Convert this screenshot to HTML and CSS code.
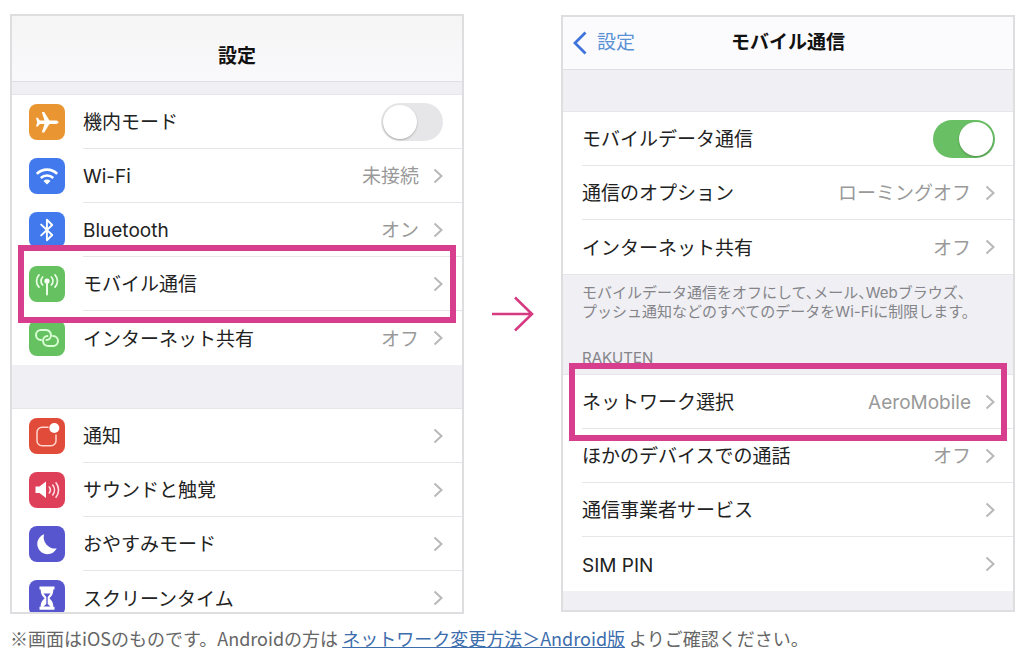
FILE: index.html
```html
<!DOCTYPE html>
<html lang="ja">
<head>
<meta charset="utf-8">
<meta name="viewport" content="width=device-width, initial-scale=1">
<title>モバイル通信の設定</title>
<link rel="stylesheet" href="styles.css">
</head>
<body>
<svg class="sprite" aria-hidden="true">
  <symbol id="chevron" viewBox="0 0 10 16"><path d="M1.5 1.5 8.5 8 1.5 14.5" fill="none" stroke="currentColor" stroke-width="2"/></symbol>
</svg>
<main class="steps">
  <section class="phone">
    <header class="bar bar-tall"><h2 class="title">設定</h2></header>
    <ul class="group group-first">
      <li class="row">
        <span class="icon orange"><svg viewBox="0 0 36 36"><path fill="#fff" d="M29.5 18.200c0 1.200-1.800 1.800-3.200 1.800h-5.800l-5.300 8.400h-2.400l2.700-8.400h-4.700l-2 2.600H7l1.200-4.400L7 13.800h1.800l2 2.600h4.700L12.800 8h2.400l5.300 8.400h5.800c1.400 0 3.200.6 3.200 1.800z"/></svg></span>
        <span class="body"><label class="label" for="airplane">機内モード</label><input class="switch" type="checkbox" role="switch" id="airplane"></span>
      </li>
      <li><a class="row" href="#wifi">
        <span class="icon blue"><svg viewBox="0 0 36 36"><g fill="none" stroke="#fff" stroke-width="2.600"><path d="M7.800 15.800a14.500 14.500 0 0 1 20.400 0"/><path d="M11.800 20a9 9 0 0 1 12.400 0"/></g><path fill="#fff" d="M14.500 23a5 5 0 0 1 7 0L18 26.600z"/></svg></span>
        <span class="body"><span class="label">Wi-Fi</span><span class="value">未接続</span><svg class="chevron"><use href="#chevron"/></svg></span>
      </a></li>
      <li><a class="row" href="#bluetooth">
        <span class="icon blue"><svg viewBox="0 0 36 36"><path d="m12.200 12.600 11 10.400-5.300 5.200V7.800l5.300 5.200-11 10.400" fill="none" stroke="#fff" stroke-width="1.900" stroke-linejoin="round" stroke-linecap="round"/></svg></span>
        <span class="body"><span class="label">Bluetooth</span><span class="value">オン</span><svg class="chevron"><use href="#chevron"/></svg></span>
      </a></li>
      <li class="marked"><a class="row" href="#mobile">
        <span class="icon green"><svg viewBox="0 0 36 36"><circle cx="18" cy="15" r="2.600" fill="#fff"/><g fill="none" stroke="#e9ffe6" stroke-width="1.700" stroke-linecap="round"><path d="M18 16v12.500" stroke-width="2"/><path d="M13.700 11a5.600 5.600 0 0 0 0 8M22.300 11a5.600 5.600 0 0 1 0 8M10 8.800a9 9 0 0 0 0 12.400M26 8.800a9 9 0 0 1 0 12.400"/></g></svg></span>
        <span class="body"><span class="label">モバイル通信</span><svg class="chevron"><use href="#chevron"/></svg></span>
      </a></li>
      <li><a class="row" href="#tethering">
        <span class="icon green"><svg viewBox="0 0 36 36"><g fill="none" stroke="#d9ffd5" stroke-width="2" stroke-linecap="round"><path d="M12 20a5 5 0 0 1 0-10h5a5.500 5.500 0 0 1 5 5c0 3-2 5-4.500 5"/><path d="M24 16a5 5 0 0 1 0 10h-5a5.500 5.500 0 0 1-5-5c0-3 2-5 4.500-5"/></g></svg></span>
        <span class="body"><span class="label">インターネット共有</span><span class="value">オフ</span><svg class="chevron"><use href="#chevron"/></svg></span>
      </a></li>
    </ul>
    <ul class="group group-cut">
      <li><a class="row" href="#notice">
        <span class="icon red"><svg viewBox="0 0 36 36"><path d="M19.500 9.200H13a5 5 0 0 0-5 5v8.600a5 5 0 0 0 5 5h9a5 5 0 0 0 5-5V16.500" fill="none" stroke="#ffd5cd" stroke-width="1.500"/><circle cx="25.300" cy="10" r="5" fill="#fff"/></svg></span>
        <span class="body"><span class="label">通知</span><svg class="chevron"><use href="#chevron"/></svg></span>
      </a></li>
      <li><a class="row" href="#sound">
        <span class="icon rose"><svg viewBox="0 0 36 36"><path d="M6.500 14.500h4L17 9.500v16.500l-6.500-5h-4z" fill="#fff"/><g fill="none" stroke="#ffdfe5" stroke-width="1.600" stroke-linecap="round"><path d="M20.300 15a5 5 0 0 1 0 6M23.700 13a8 8 0 0 1 0 10M27 10.800a11.500 11.500 0 0 1 0 14.400"/></g></svg></span>
        <span class="body"><span class="label">サウンドと触覚</span><svg class="chevron"><use href="#chevron"/></svg></span>
      </a></li>
      <li><a class="row" href="#dnd">
        <span class="icon violet"><svg viewBox="0 0 36 36"><path d="M15.200 8.300a10.200 10.200 0 1 0 12.500 14A11 11 0 0 1 15.200 8.300z" fill="#fff"/></svg></span>
        <span class="body"><span class="label">おやすみモード</span><svg class="chevron"><use href="#chevron"/></svg></span>
      </a></li>
      <li><a class="row" href="#screentime">
        <span class="icon violet"><svg viewBox="0 0 36 36"><path d="M10.500 6.500h15v3h-1.200c0 4.500-1.500 6.500-4 8.700 2.500 2.200 4 4.200 4 8.600h1.200v3h-15v-3h1.200c0-4.400 1.500-6.400 4-8.600-2.500-2.200-4-4.200-4-8.700h-1.200z" fill="#fff"/><path d="M14.500 13.500h7L18.700 17v7l2.800 2.500h-7l2.800-2.500v-7z" fill="#5756ce"/></svg></span>
        <span class="body"><span class="label">スクリーンタイム</span><svg class="chevron"><use href="#chevron"/></svg></span>
      </a></li>
    </ul>
  </section>

  <svg class="arrow" viewBox="0 0 42 36" role="img" aria-label="次へ"><path d="M0 18h40M23 1.500 40 18 23 34.500" fill="none" stroke="#d63a80" stroke-width="2.600"/></svg>

  <section class="phone phone-plain">
    <header class="bar">
      <a class="back" href="#settings"><svg class="back-mark" viewBox="0 0 14 24"><path d="M12.500 1.500 2 12l10.500 10.500" fill="none" stroke="#3f73dc" stroke-width="2.800"/></svg>設定</a>
      <h2 class="title">モバイル通信</h2>
    </header>
    <ul class="group group-top">
      <li class="row"><span class="body"><label class="label" for="data">モバイルデータ通信</label><input class="switch" type="checkbox" role="switch" id="data" checked></span></li>
      <li><a class="row" href="#options"><span class="body"><span class="label">通信のオプション</span><span class="value">ローミングオフ</span><svg class="chevron"><use href="#chevron"/></svg></span></a></li>
      <li><a class="row" href="#sharing"><span class="body"><span class="label">インターネット共有</span><span class="value">オフ</span><svg class="chevron"><use href="#chevron"/></svg></span></a></li>
    </ul>
    <p class="hint">モバイルデータ通信をオフにして、メール、Webブラウズ、<br>プッシュ通知などのすべてのデータをWi-Fiに制限します。</p>
    <h3 class="caption">RAKUTEN</h3>
    <ul class="group">
      <li class="marked"><a class="row" href="#network"><span class="body"><span class="label">ネットワーク選択</span><span class="value">AeroMobile</span><svg class="chevron"><use href="#chevron"/></svg></span></a></li>
      <li><a class="row" href="#calls"><span class="body"><span class="label">ほかのデバイスでの通話</span><span class="value">オフ</span><svg class="chevron"><use href="#chevron"/></svg></span></a></li>
      <li><a class="row" href="#carrier"><span class="body"><span class="label">通信事業者サービス</span><svg class="chevron"><use href="#chevron"/></svg></span></a></li>
      <li><a class="row" href="#simpin"><span class="body"><span class="label">SIM PIN</span><svg class="chevron"><use href="#chevron"/></svg></span></a></li>
    </ul>
  </section>
</main>
<p class="note">※画面はiOSのものです。Androidの方は <a href="#android">ネットワーク変更方法＞Android版</a> よりご確認ください。</p>
</body>
</html>
```
FILE: styles.css
```css
* { box-sizing: border-box; }

body {
  margin: 0;
  padding: 14px 9px 14px 10px;
  background: #fff;
  color: #222;
  font: 19px/24px Inter, "Noto Sans CJK JP", sans-serif;
}

h2, h3, p, ul { margin: 0; padding: 0; font-size: inherit; }
ul { list-style: none; }
a { color: inherit; text-decoration: none; }
.sprite { position: absolute; width: 0; height: 0; }

.steps {
  display: grid;
  grid-template-columns: 1fr 97px 1fr;
  align-items: center;
}

.phone {
  border: 2px solid #dedee1;
  background: #efeff4;
}
.phone-plain {
  align-self: start;
  margin-top: 1px;
  padding-bottom: 19px;
}

.bar {
  display: grid;
  grid-template-columns: 1fr auto 1fr;
  align-items: center;
  padding: 14px 10px;
  border-bottom: 1px solid #e0e0e4;
  background: #fbfbfe;
}
.bar-tall {
  padding: 29px 10px 12px;
  background: linear-gradient(#f5f5f5, #f9f9fc);
}
.title { grid-column: 2; color: #111; font-weight: 700; }
.back {
  display: flex;
  align-items: center;
  gap: 10px;
  color: #5a91d4;
}
.back-mark { width: 14px; height: 24px; }

.group {
  border-top: 1px solid #e6e6ea;
  background: #fff;
}
.group-first { margin-top: 12px; }
.group-top { margin-top: 41px; }
.group-cut {
  height: 204px;
  margin-top: 43px;
  overflow: hidden;
}

.row {
  display: flex;
  align-items: center;
  gap: 18px;
  height: 54px;
  padding-left: 17px;
}
.phone-plain .row { padding-left: 19px; }
.body {
  display: flex;
  flex: 1;
  align-items: center;
  align-self: stretch;
  gap: 14px;
  padding-right: 19px;
  border-bottom: 1px solid #e6e6e8;
}
.phone-plain .body { padding-right: 18px; }
.group > li:last-child .body { border-bottom: 0; }
.label { flex: 1; }
.label, .value { padding-top: 3px; }
.value { color: #999; }
.chevron { width: 10px; height: 16px; color: #b8b8bb; }

.icon {
  width: 36px;
  height: 36px;
  border-radius: 8px;
}
.icon svg { display: block; }
.orange { background: #e99632; }
.blue { background: #427aee; }
.green { background: #66c160; }
.red { background: #e14c3a; }
.rose { background: #df4059; }
.violet { background: #5756ce; }

.switch {
  display: flex;
  width: 62px;
  height: 38px;
  margin: 0;
  padding: 2px;
  border-radius: 19px;
  background: #e6e6e8;
  appearance: none;
}
.switch::before {
  width: 34px;
  height: 34px;
  border-radius: 50%;
  background: #fff;
  box-shadow: 0 1px 2px #0004;
  content: "";
}
.switch:checked { justify-content: flex-end; background: #69bf64; }

.marked { position: relative; }
.marked::after {
  position: absolute;
  z-index: 1;
  inset: -12px 6px;
  border: 6px solid #d83e8e;
  content: "";
  pointer-events: none;
}

.arrow { width: 42px; height: 36px; justify-self: center; }

.hint, .caption {
  padding: 0 19px;
  color: #858589;
  font-size: 15px;
  line-height: 19px;
}
.hint {
  padding-top: 8px;
  border-top: 1px solid #e6e6ea;
  font-feature-settings: "halt";
}
.caption { padding: 27px 19px 7px; font-weight: 400; }

.note {
  margin-top: 12px;
  color: #666;
  font-family: "Noto Sans CJK JP", sans-serif;
  font-size: 18px;
}
.note a { color: #3c6dac; text-decoration: underline; }
```
